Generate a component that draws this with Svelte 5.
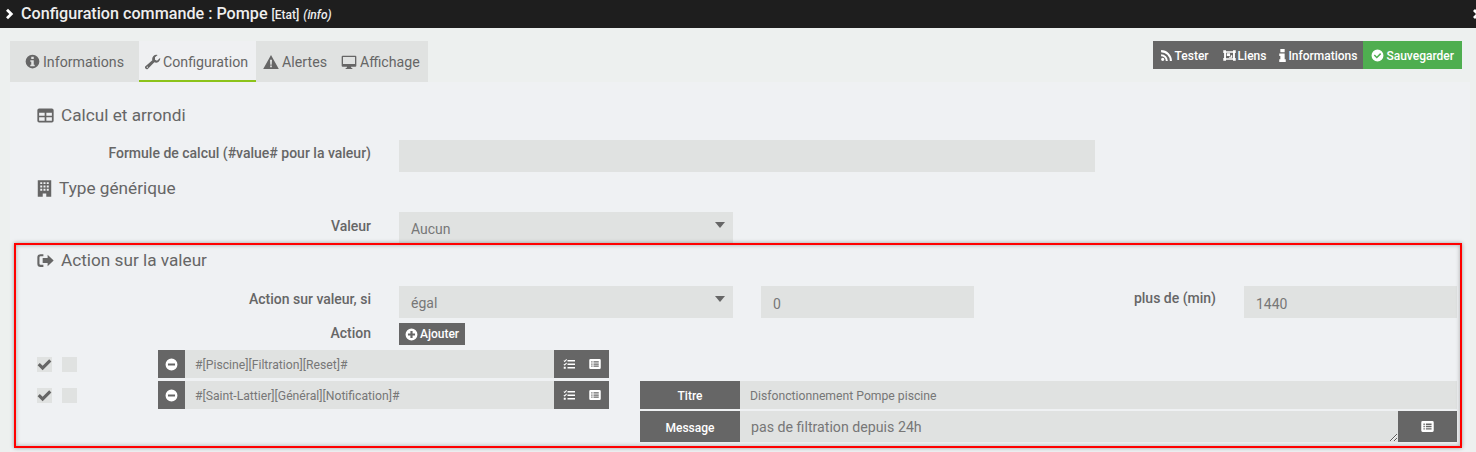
<script>
  const tabs = [
    { id: 'info', label: 'Informations' },
    { id: 'wrench', label: 'Configuration', active: true },
    { id: 'warn', label: 'Alertes' },
    { id: 'desktop', label: 'Affichage' }
  ];
  const actions = [
    { id: 'rss', label: 'Tester' },
    { id: 'group', label: 'Liens' },
    { id: 'i', label: 'Informations' }
  ];
</script>

{#snippet icon(id, cls = '')}
  <svg class="ic {cls}" viewBox="0 0 24 24" aria-hidden="true">
    {#if id === 'info'}
      <path fill-rule="evenodd" d="M12 1a11 11 0 1 0 0 22 11 11 0 0 0 0-22zM10 4.500h4v3.500h-4zM8.500 10h5.500v7h1.500v2.500h-7V17H10v-4.500H8.500z"/>
    {:else if id === 'wrench'}
      <path fill-rule="evenodd" d="M23 6.500a6.500 6.500 0 0 1-9 6L4.500 22a2.600 2.600 0 0 1-3.700-.1 2.600 2.600 0 0 1-.1-3.700L11 9.500a6.500 6.500 0 0 1 8-8l-4 3.500v3.500l3 1.500 4.500-4a6 6 0 0 1 .5 1.500zM3.500 18.800a1 1 0 1 0 0 2 1 1 0 0 0 0-2z"/>
    {:else if id === 'warn'}
      <path fill-rule="evenodd" d="M12 1.500 23.700 22.500H.3zM10.500 8.500l.4 7.500h2.200l.4-7.500zM10.700 17.300v2.700h2.600v-2.700z"/>
    {:else if id === 'desktop'}
      <path fill-rule="evenodd" d="M2.500 2.500h19A1.500 1.500 0 0 1 23 4v13.500a1.500 1.500 0 0 1-1.500 1.500H15l.5 2H17v1.500H7V21h1.500l.5-2H2.500A1.500 1.500 0 0 1 1 17.500V4a1.500 1.500 0 0 1 1.500-1.500zM3 4.500V15h18V4.500z"/>
    {:else if id === 'table'}
      <path fill-rule="evenodd" d="M3 2h18A2.500 2.500 0 0 1 23.500 4.500v15A2.500 2.500 0 0 1 21 22H3A2.500 2.500 0 0 1 .5 19.500v-15A2.500 2.500 0 0 1 3 2zM3 8v4.500h7.800V8zm10.200 0v4.500H21V8zM3 14.500v5h7.800v-5zm10.200 0v5H21v-5z"/>
    {:else if id === 'building'}
      <path fill-rule="evenodd" d="M2.500 .5h19V23.500h-7V19h-5v4.500h-7zM6 3v2.800h2.800V3zm4.600 0v2.800h2.800V3zm4.600 0v2.800H18V3zM6 7.800v2.800h2.800V7.800zm4.600 0v2.800h2.800V7.800zm4.600 0v2.800H18V7.800zM6 12.500v2.800h2.800v-2.800zm4.600 0v2.800h2.800v-2.800zm4.600 0v2.800H18v-2.800z"/>
    {:else if id === 'signout'}
      <path d="M9 3v3H5a1.500 1.500 0 0 0-1.500 1.500v9A1.500 1.500 0 0 0 5 18h4v3H5a4.500 4.500 0 0 1-4.500-4.500v-9A4.500 4.500 0 0 1 5 3zM15 4 23.500 12 15 20V15.500H8v-7h7z"/>
    {:else if id === 'rss'}
      <path d="M2 2a20 20 0 0 1 20 20h-3.800A16.200 16.200 0 0 0 2 5.800zM2 9.500A12.500 12.500 0 0 1 14.500 22h-3.800A8.700 8.700 0 0 0 2 13.300zM5 16a3 3 0 1 1 0 6 3 3 0 0 1 0-6z"/>
    {:else if id === 'group'}
      <path fill-rule="evenodd" d="M.5 2.500h5V4h13V2.500h5v5H22v9h1.500v5h-5V20h-13v1.500h-5v-5H2v-9H.5zM5.500 7v10h13V7zM7 8h6v5H7zm7.500 3.500H17V16h-6v-1.500h3.500z"/>
    {:else if id === 'i'}
      <path d="M8 0h8v6H8zM6 8.500h10V19h2v5H6v-5h2v-6H6z"/>
    {:else if id === 'check-circle'}
      <path fill-rule="evenodd" d="M12 1a11 11 0 1 0 0 22 11 11 0 0 0 0-22zM18.800 9.500 10.700 17.600 5.200 12.100l1.900-1.900 3.600 3.600 6.200-6.200z"/>
    {:else if id === 'plus-circle'}
      <path fill-rule="evenodd" d="M12 1a11 11 0 1 0 0 22 11 11 0 0 0 0-22zM10 5.500h4V10h4.500v4H14v4.500h-4V14H5.500v-4H10z"/>
    {:else if id === 'minus-circle'}
      <path fill-rule="evenodd" d="M12 1a11 11 0 1 0 0 22 11 11 0 0 0 0-22zM5.500 10h13v4h-13z"/>
    {:else if id === 'check'}
      <path d="M9 21 1 13l3.500-3.500L9 14 19.500 3.500 23 7z"/>
    {:else if id === 'tasks'}
      <path d="M9 4h15v3H9zM9 11h15v3H9zM9 18h15v3H9zM1 5.500l1.200-1.200L3.300 5.500 6.500 2 8 3.300 3.300 8.500zM1 12.500l1.200-1.200 1.100 1.200L6.500 9 8 10.300 3.300 15.500zM1.500 17.500h4v4h-4z"/>
    {:else if id === 'list'}
      <path fill-rule="evenodd" d="M3 2h18a2.500 2.500 0 0 1 2.500 2.500v15A2.500 2.500 0 0 1 21 22H3a2.500 2.500 0 0 1-2.500-2.500v-15A2.500 2.500 0 0 1 3 2zM4.500 6.500V9H7V6.500zm4.500 0V9h10.500V6.500zm-4.500 4.300v2.500H7v-2.500zm4.500 0v2.500h10.500v-2.500zM4.500 15v2.500H7V15zM9 15v2.500h10.500V15z"/>
    {:else if id === 'chevron'}
      <path d="M8 1.500 18.500 12 8 22.500l-4-4L10.500 12 4 5.500z"/>
    {:else if id === 'x'}
      <path d="M6 2l6 6 6-6 4 4-6 6 6 6-4 4-6-6-6 6-4-4 6-6-6-6z"/>
    {/if}
  </svg>
{/snippet}

{#snippet cmdRow(name)}
  <div class="cmd">
    <div class="checks">
      <span class="chk">{@render icon('check')}</span>
      <span class="chk"></span>
    </div>
    <div class="group">
      <button class="addon minus">{@render icon('minus-circle')}</button>
      <input class="field small" readonly value={name} />
      <div class="addon tools">
        {@render icon('tasks')}
        {@render icon('list')}
      </div>
    </div>
  </div>
{/snippet}

<div class="page">
  <header class="bar">
    {@render icon('chevron', 'chev')}
    <h1>Configuration commande : Pompe <small>[Etat]</small> <small><em>(info)</em></small></h1>
    {@render icon('x', 'close')}
  </header>

  <div class="topline">
    <nav class="tabs">
      {#each tabs as t}
        <a class="tab" class:active={t.active} href="#{t.id}">{@render icon(t.id)}{t.label}</a>
      {/each}
    </nav>
    <div class="btns">
      {#each actions as a}
        <button class="btn">{@render icon(a.id, a.id === 'i' ? 'narrow' : '')}{a.label}</button>
      {/each}
      <button class="btn save">{@render icon('check-circle')}Sauvegarder</button>
    </div>
  </div>

  <main class="panel">
    <h2 class="h-calc">{@render icon('table')}Calcul et arrondi</h2>
    <div class="row r1">
      <label for="f1">Formule de calcul (#value# pour la valeur)</label>
      <input id="f1" class="field wide" readonly />
    </div>

    <h2 class="h-type">{@render icon('building', 'bld')}Type générique</h2>
    <div class="row r2">
      <label for="f2">Valeur</label>
      <div class="select"><select id="f2"><option>Aucun</option></select></div>
    </div>

    <h2 class="h-act">{@render icon('signout')}Action sur la valeur</h2>
    <div class="row r3">
      <label for="f3">Action sur valeur, si</label>
      <div class="select"><select id="f3"><option>égal</option></select></div>
      <input class="field mid" readonly value="0" />
      <label class="lb2" for="f4">plus de (min)</label>
      <input id="f4" class="field mid" readonly value="1440" />
    </div>
    <div class="row r4">
      <span class="lbl">Action</span>
      <button class="add">{@render icon('plus-circle')}Ajouter</button>
    </div>

    <div class="cmds">
      <div class="cmds-left">
        {@render cmdRow('#[Piscine][Filtration][Reset]#')}
        {@render cmdRow('#[Saint-Lattier][Général][Notification]#')}
      </div>
      <div class="notif">
        <div class="nrow">
          <span class="tag">Titre</span>
          <input class="field small grow" readonly value="Disfonctionnement Pompe piscine" />
        </div>
        <div class="nrow msg">
          <span class="tag">Message</span>
          <textarea class="field area" readonly>pas de filtration depuis 24h</textarea>
          <span class="tag end">{@render icon('list')}</span>
        </div>
      </div>
    </div>
  </main>

  <div class="frame"></div>
</div>

<style>
  :global(body) {
    margin: 0;
    background: #edf0ef;
  }
  .page {
    position: relative;
    width: 1476px;
    height: 452px;
    overflow: hidden;
    font-family: Roboto, "Liberation Sans", sans-serif;
    color: #666;
    background: #edf0ef;
  }
  .ic {
    width: 1em;
    height: 1em;
    fill: currentColor;
    flex: none;
  }
  .bar {
    height: 28px;
    background: #1e1e1e;
    color: #eee;
    display: flex;
    align-items: center;
    padding-left: 4px;
  }
  .chev {
    font-size: 12px;
    color: #fff;
    margin-right: 5px;
  }
  .close {
    font-size: 12px;
    color: #fff;
    margin-left: auto;
    margin-right: -8px;
  }
  h1 {
    margin: 0 0 1px;
    font-size: 16.150px;
    font-weight: 500;
    white-space: nowrap;
  }
  h1 small {
    font-size: 12px;
  }
  .topline {
    display: flex;
    justify-content: space-between;
    align-items: flex-start;
    padding: 13px 14px 0 10px;
    height: 41px;
  }
  .tabs {
    display: flex;
    height: 41px;
    background: #e0e2e1;
  }
  .tab {
    display: flex;
    align-items: center;
    gap: 3px;
    font-size: 14.200px;
    color: #666;
    text-decoration: none;
    padding: 0 7px;
    box-sizing: border-box;
  }
  .tab:first-child {
    padding: 0 15px;
  }
  .tab:last-child {
    padding-right: 8px;
  }
  .tab .ic {
    font-size: 16px;
  }
  .tab:first-child .ic {
    font-size: 15px;
  }
  .tab.active {
    background: #eff0f2;
    border-bottom: 2px solid #8cc31a;
    padding: 2px 8px 0 6px;
    gap: 2px;
  }
  .btns {
    display: flex;
    height: 28px;
  }
  .btn {
    font: 500 12px Roboto, sans-serif;
    color: #fff;
    background: #666;
    border: 0;
    display: flex;
    align-items: center;
    gap: 2px;
    padding: 2px 6px 0 7px;
    white-space: nowrap;
  }
  .btn:nth-child(2) {
    padding-left: 8px;
  }
  .btn .ic {
    font-size: 13px;
    margin-top: -1px;
  }
  .btn .narrow {
    margin: -1px -3px 0 -3px;
  }
  .btn.save {
    background: #4fae50;
    padding: 2px 8px 0;
  }
  .panel {
    margin: 0 6px 0 10px;
    height: 370px;
    box-sizing: border-box;
    background: #eff1f3;
    padding: 0 13px 0 27px;
  }
  h2 {
    margin: 0;
    font-size: 17.200px;
    line-height: 20px;
    font-weight: 400;
    display: flex;
    align-items: center;
    gap: 7px;
    color: #666;
  }
  h2 .ic {
    font-size: 17px;
  }
  h2 .bld {
    font-size: 17px;
    margin-left: -1px;
    margin-right: -1px;
  }
  .h-calc { padding-top: 23px; }
  .h-type { padding-top: 6px; }
  .h-act { padding-top: 6px; }
  .row {
    display: flex;
    align-items: center;
    height: 32px;
    gap: 28px;
  }
  .r1 { margin-top: 15px; }
  .r2 { margin-top: 14px; }
  .r3 { margin-top: 16px; }
  .r4 {
    height: 22px;
    margin-top: 5px;
  }
  label, .lbl {
    width: 334px;
    flex: none;
    text-align: right;
    font-size: 14px;
    font-weight: 500;
    color: #666;
    white-space: nowrap;
    box-sizing: border-box;
    padding-bottom: 7px;
  }
  .r2 label { padding-bottom: 5px; }
  .lbl { padding-bottom: 0; margin-top: -3px; }
  .lb2 {
    width: 214px;
    padding-bottom: 8px;
  }
  .r3 > label:first-child { padding-bottom: 6px; }
  .field {
    background: #e0e2e1;
    border: 0;
    outline: 0;
    margin: 0;
    box-sizing: border-box;
    font: 400 14px Roboto, sans-serif;
    color: #777;
    padding: 0 12px;
    height: 32px;
    display: block;
  }
  .wide { width: 696px; }
  .mid {
    width: 213px;
    flex: none;
    padding-top: 4px;
  }
  .select {
    position: relative;
    width: 334px;
    height: 32px;
    flex: none;
  }
  .select::after {
    content: "";
    position: absolute;
    right: 8px;
    top: 10px;
    border: 5.500px solid transparent;
    border-top: 6px solid #666;
    border-bottom: 0;
  }
  select {
    appearance: none;
    width: 100%;
    height: 100%;
    background: #e0e2e1;
    border: 0;
    outline: 0;
    font: 400 14px Roboto, sans-serif;
    color: #777;
    padding: 2px 12px 0;
  }
  .add {
    font: 500 12px Roboto, sans-serif;
    color: #fff;
    background: #666;
    border: 0;
    height: 22px;
    width: 66px;
    padding: 0;
    display: flex;
    align-items: center;
    justify-content: center;
    gap: 2px;
  }
  .add .ic { font-size: 13px; }
  .cmds {
    display: flex;
    margin-top: 5px;
  }
  .cmds-left {
    width: 603px;
    flex: none;
  }
  .cmd {
    display: flex;
    align-items: center;
    height: 28px;
    margin-bottom: 3px;
  }
  .checks {
    width: 121px;
    flex: none;
    display: flex;
    gap: 10px;
  }
  .chk {
    width: 15px;
    height: 15px;
    background: #e0e2e1;
    display: flex;
    align-items: center;
    justify-content: center;
    color: #666;
    font-size: 15px;
  }
  .group {
    display: flex;
    width: 451px;
    height: 28px;
  }
  .addon {
    background: #666;
    color: #fff;
    border: 0;
    padding: 0;
    display: flex;
    align-items: center;
    justify-content: center;
    font-size: 12px;
    flex: none;
  }
  .minus {
    width: 27px;
    font-size: 13px;
  }
  .tools {
    width: 55px;
    gap: 14px;
  }
  .small {
    font-size: 12.200px;
    height: 28px;
    flex: 1;
    min-width: 0;
    padding: 1px 10px 0;
  }
  .notif {
    width: 817px;
    margin-top: 31px;
    flex: none;
  }
  .nrow {
    display: flex;
    height: 28px;
  }
  .msg {
    height: 31px;
    margin-top: 2px;
  }
  .tag {
    width: 100px;
    flex: none;
    background: #666;
    color: #fff;
    font-size: 12px;
    font-weight: 500;
    display: flex;
    align-items: center;
    justify-content: center;
    padding-top: 2px;
    box-sizing: border-box;
  }
  .tag.end {
    width: 59px;
    font-size: 13px;
    padding-top: 0;
  }
  .grow { flex: 1; }
  .area {
    flex: 1;
    min-width: 0;
    height: 31px;
    padding: 8px 11px 0;
    line-height: 16px;
    font-size: 14.200px;
    resize: both;
  }
  .frame {
    position: absolute;
    left: 14px;
    top: 243px;
    width: 1448px;
    height: 205px;
    box-sizing: border-box;
    border: 2px solid #f00;
    box-shadow: 0 0 4px rgba(0, 0, 0, .35), inset 0 0 4px rgba(0, 0, 0, .3);
    pointer-events: none;
  }
</style>
